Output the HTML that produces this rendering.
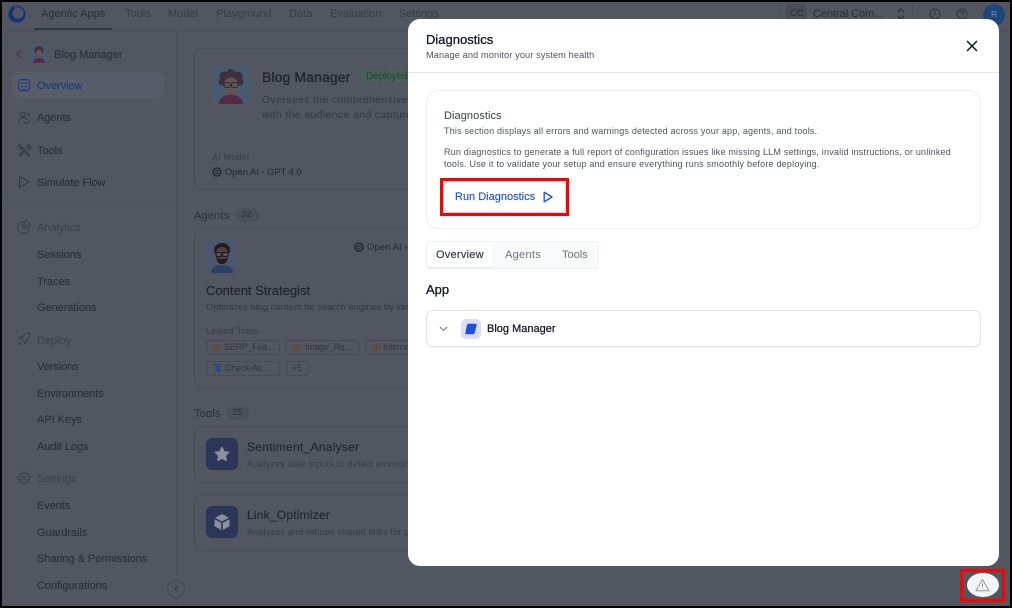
<!DOCTYPE html>
<html><head><meta charset="utf-8">
<style>
html,body{margin:0;padding:0;background:#000;}
#p{position:relative;width:1012px;height:608px;overflow:hidden;background:#000;font-family:"Liberation Sans",sans-serif;}
#bg{position:absolute;left:2px;top:2px;width:1008px;height:604px;background:#515661;overflow:hidden;}
.t{position:absolute;white-space:nowrap;line-height:16px;}
.n{font-size:11px;color:#2a2f3a;letter-spacing:-.05px;-webkit-text-stroke:.1px #2a2f3a;}
.g{color:#383d48;-webkit-text-stroke:.1px #383d48;}
.nav{font-size:11px;color:#383d48;}
.md{-webkit-text-stroke:.3px currentColor;}
.box{position:absolute;box-sizing:border-box;border:1px solid #494e59;border-radius:8px;}
svg{position:absolute;overflow:visible;}
.chip{position:absolute;box-sizing:border-box;height:15px;border:1px solid #474c57;border-radius:3px;}
.c{font-size:9px;color:#333844;letter-spacing:-.25px;}
#m{position:absolute;left:408px;top:19px;width:591px;height:547px;background:#fff;border-radius:12px;overflow:hidden;}
#m .t{color:#111827;}
</style></head><body>
<div id="p">
<div id="bg"></div>

<!-- logo -->
<svg style="left:8px;top:5px" width="18" height="18" viewBox="0 0 18 18"><circle cx="9" cy="9" r="8.600" fill="#15327a"/><circle cx="10" cy="8.300" r="5.400" fill="#515661"/><path d="M6 2.500a7.500 7.500 0 0 1 9.500 4.500" fill="none" stroke="#3a4a68" stroke-width="1.500"/></svg>
<!-- top nav -->
<div class="t nav" style="left:41px;top:6px;color:#2a2f3a">Agentic Apps</div>
<div class="t nav" style="left:125px;top:6px">Tools</div>
<div class="t nav" style="left:168px;top:6px">Model</div>
<div class="t nav" style="left:216px;top:6px">Playground</div>
<div class="t nav" style="left:289px;top:6px">Data</div>
<div class="t nav" style="left:330px;top:6px">Evaluation</div>
<div class="t nav" style="left:399px;top:6px">Settings</div>
<div style="position:absolute;left:34px;top:28px;width:78px;height:2px;background:#33383f"></div>
<div style="position:absolute;left:2px;top:30px;width:1008px;height:1px;background:#4b505b"></div>
<div style="position:absolute;left:176px;top:30px;width:1px;height:576px;background:#4c515c"></div>

<!-- top right -->
<div style="position:absolute;left:780px;top:2px;width:1px;height:28px;background:#494e59"></div>
<div style="position:absolute;left:786px;top:4px;width:20px;height:20px;border-radius:5px;background:#494e59;border:1px solid #444954;box-sizing:border-box"></div>
<div class="t g" style="left:790px;top:6px;font-size:9.500px;color:#2a2f3a">CC</div>
<div class="t" style="left:813px;top:6px;font-size:11px;color:#2a2f3a;letter-spacing:-.05px">Central Com...</div>
<svg style="left:897px;top:8px" width="8" height="12" viewBox="0 0 8 12"><path d="M1 4l3-3 3 3M1 8l3 3 3-3" fill="none" stroke="#282d38" stroke-width="1.200"/></svg>
<div style="position:absolute;left:912px;top:2px;width:1px;height:28px;background:#494e59"></div>
<svg style="left:929px;top:8px" width="12" height="12" viewBox="0 0 12 12"><circle cx="6" cy="6" r="5" fill="none" stroke="#2f343f" stroke-width="1"/><path d="M6 3v3.200l2 1" fill="none" stroke="#2f343f"/></svg>
<svg style="left:956px;top:8px" width="12" height="12" viewBox="0 0 12 12"><circle cx="6" cy="6" r="5" fill="none" stroke="#2f343f" stroke-width="1"/><path d="M4.600 4.800a1.500 1.500 0 1 1 2 1.400c-.4.2-.6.4-.6.9M6 8.600v.4" fill="none" stroke="#2f343f"/></svg>
<div style="position:absolute;left:983px;top:4px;width:22px;height:22px;border-radius:50%;background:#1e4679"></div>
<div class="t" style="left:991px;top:6px;font-size:8.500px;color:#7d93b5">R</div>

<!-- sidebar -->
<svg style="left:15px;top:49px" width="8" height="10" viewBox="0 0 8 10"><path d="M5.500 1L2 5l3.500 4" fill="none" stroke="#30353f" stroke-width="1"/></svg>
<svg style="left:30px;top:45px" width="18" height="18" viewBox="0 0 18 18"><rect width="18" height="18" rx="4" fill="#465a72"/><circle cx="9" cy="5.500" r="4.500" fill="#3d2b38"/><ellipse cx="9" cy="8" rx="3" ry="3.600" fill="#6d4f50"/><path d="M3.500 18c0-4 2.500-5 5.500-5s5.500 1 5.500 5z" fill="#542a46"/></svg>
<div class="t md" style="left:54px;top:47px;font-size:11px;color:#2f343f;-webkit-text-stroke-width:.25px">Blog Manager</div>

<div style="position:absolute;left:12px;top:72px;width:152px;height:26px;border-radius:6px;background:#585d69"></div>
<svg style="left:18px;top:79px" width="12" height="12" viewBox="0 0 12 12"><rect x=".6" y=".6" width="10.800" height="10.800" rx="2.200" fill="none" stroke="#1a3a86" stroke-width="1.100"/><g fill="#1a3a86"><circle cx="4.200" cy="4.200" r=".9"/><circle cx="7.800" cy="4.200" r=".9"/><circle cx="4.200" cy="7.800" r=".9"/><circle cx="7.800" cy="7.800" r=".9"/></g></svg>
<div class="t n" style="left:37px;top:78px;color:#1b3a85;-webkit-text-stroke-color:#1b3a85">Overview</div>

<svg style="left:18px;top:111px" width="13" height="13" viewBox="0 0 13 13"><circle cx="5" cy="3.500" r="2.300" fill="none" stroke="#32373f"/><path d="M1 11c0-3 2-4.500 4-4.500s3 .8 3.800 2.500M6 12c3 .5 5-.5 6-2.500M9.500 1.500l.5 1.500 1.500.5-1.500.5-.5 1.500" fill="none" stroke="#32373f" stroke-width=".9"/></svg>
<div class="t n" style="left:37px;top:110px">Agents</div>

<svg style="left:17px;top:143px" width="14" height="14" viewBox="0 0 14 14"><path d="M2 1l2.500 2.500v1h1L12.500 12 11.500 13 4.500 5.500h-1L1 3zM9 5.500a3 3 0 0 1 4-3.500L11 4l1 1 2-1.500a3 3 0 0 1-4 3.500M6 8l-4 4 1 1 4-4" fill="none" stroke="#32373f" stroke-width=".9"/></svg>
<div class="t n" style="left:37px;top:143px">Tools</div>

<svg style="left:18px;top:175px" width="12" height="14" viewBox="0 0 12 14"><path d="M1.500 1.500v11L11 7z" fill="none" stroke="#32373f" stroke-width="1"/></svg>
<div class="t n" style="left:37px;top:175px">Simulate Flow</div>

<div style="position:absolute;left:2px;top:204px;width:174px;height:1px;background:#4c515c"></div>

<svg style="left:17px;top:220px" width="14" height="14" viewBox="0 0 14 14"><path d="M6 1.500a6 6 0 1 0 6.500 6.500H6zM8 .7a6 6 0 0 1 5.300 5.300H8z" fill="none" stroke="#383d48" stroke-width=".9"/></svg>
<div class="t n" style="left:37px;top:220px;color:#3b404b;-webkit-text-stroke-width:0">Analytics</div>
<div class="t n" style="left:37px;top:247px">Sessions</div>
<div class="t n" style="left:37px;top:274px">Traces</div>
<div class="t n" style="left:37px;top:300px">Generations</div>

<svg style="left:17px;top:332px" width="14" height="14" viewBox="0 0 14 14"><path d="M13 1c-4 0-7 2-8.500 6l2.500 2.500C11 8 13 5 13 1zM4.500 7H2l2-2.500h2M7 9.500V12l2.500-2V8M3 10c-1 .5-1.500 2-1.500 2.500C2 12.500 3.500 12 4 11" fill="none" stroke="#383d48" stroke-width=".9"/></svg>
<div class="t n" style="left:37px;top:333px;color:#3b404b;-webkit-text-stroke-width:0">Deploy</div>
<div class="t n" style="left:37px;top:359px">Versions</div>
<div class="t n" style="left:37px;top:386px">Environments</div>
<div class="t n" style="left:37px;top:412px">API Keys</div>
<div class="t n" style="left:37px;top:439px">Audit Logs</div>

<svg style="left:17px;top:471px" width="14" height="14" viewBox="0 0 14 14"><circle cx="7" cy="7" r="2" fill="none" stroke="#383d48" stroke-width=".9"/><path d="M5.800 1h2.400l.4 1.700 1.600-.7 1.700 1.700-.8 1.500 1.900.6v2.400l-1.900.6.8 1.500-1.700 1.700-1.600-.7-.4 1.700H5.800l-.4-1.700-1.600.7-1.700-1.700.8-1.500L1 8.200V5.800l1.900-.6-.8-1.500L3.800 2l1.600.7z" fill="none" stroke="#383d48" stroke-width=".9"/></svg>
<div class="t n" style="left:37px;top:471px;color:#3b404b;-webkit-text-stroke-width:0">Settings</div>
<div class="t n" style="left:37px;top:498px">Events</div>
<div class="t n" style="left:37px;top:525px">Guardrails</div>
<div class="t n" style="left:37px;top:551px">Sharing &amp; Permissions</div>
<div class="t n" style="left:37px;top:578px">Configurations</div>

<div style="position:absolute;left:167px;top:580px;width:18px;height:18px;border-radius:50%;box-sizing:border-box;border:1px solid #454a55;background:#515661"></div>
<svg style="left:174px;top:585px" width="5" height="8" viewBox="0 0 5 8"><path d="M4 1L1 4l3 3" fill="none" stroke="#2f343f" stroke-width="1"/></svg>

<!-- content -->
<div class="box" style="left:194px;top:48px;width:260px;height:142px;"></div>
<svg style="left:212px;top:66px" width="38" height="38" viewBox="0 0 38 38"><rect width="38" height="38" rx="6" fill="#465a70"/><g fill="#3f2f3c"><circle cx="12" cy="10" r="4.500"/><circle cx="19" cy="8" r="5"/><circle cx="26" cy="10" r="4.500"/><circle cx="10" cy="16" r="3.500"/><circle cx="28" cy="16" r="3.500"/></g><ellipse cx="19" cy="20" rx="7.500" ry="8.500" fill="#6d5051"/><rect x="12" y="16.500" width="6.500" height="5" rx="2" fill="#4b5c60" stroke="#2f2b30"/><rect x="19.500" y="16.500" width="6.500" height="5" rx="2" fill="#4b5c60" stroke="#2f2b30"/><path d="M7 38c0-6 5-9 12-9s12 3 12 9z" fill="#542a48"/></svg>
<div class="t md" style="left:262px;top:69px;font-size:14px;color:#1f242f;letter-spacing:.1px">Blog Manager</div>
<div style="position:absolute;left:360px;top:69px;width:60px;height:14px;border-radius:8px;background:#4c5e5b;border:1px solid #475d55;box-sizing:border-box"></div>
<div class="t" style="left:366px;top:69px;font-size:10px;color:#1a4a32;letter-spacing:-.1px">Deployed</div>
<div class="t g" style="left:262px;top:92px;font-size:10.500px;letter-spacing:.35px">Oversees the comprehensive</div>
<div class="t g" style="left:262px;top:107px;font-size:10.500px;letter-spacing:.35px">with the audience and capture</div>
<div class="t" style="left:212px;top:149px;font-size:9px;color:#383d48;letter-spacing:.2px">AI Model</div>
<svg style="left:212px;top:167px" width="10" height="10" viewBox="0 0 10 10"><circle cx="5" cy="5" r="4" fill="none" stroke="#262b35" stroke-width="1.500"/><circle cx="5" cy="5" r="1.500" fill="none" stroke="#262b35"/></svg>
<div class="t" style="left:225px;top:165px;font-size:9.500px;color:#2a2f3a;letter-spacing:-.08px;-webkit-text-stroke:.1px #2a2f3a">Open AI - GPT 4.0</div>

<div class="t" style="left:194px;top:208px;font-size:11px;color:#2c313c;letter-spacing:.2px">Agents</div>
<div style="position:absolute;left:235px;top:208px;width:24px;height:14px;border-radius:8px;background:#4b505b"></div>
<div class="t" style="left:241px;top:207px;font-size:9.500px;color:#2c313c">32</div>

<div class="box" style="left:194px;top:228px;width:260px;height:160px;"></div>
<svg style="left:206px;top:240px" width="32" height="33" viewBox="0 0 32 33"><rect width="32" height="33" rx="6" fill="#4c566f"/><ellipse cx="16" cy="10" rx="8" ry="7" fill="#241d1f"/><ellipse cx="16" cy="15" rx="6.500" ry="8" fill="#57403a"/><path d="M10 17c1 6 3 7 6 7s5-1 6-7c-1 2-3 2-6 2s-5 0-6-2z" fill="#241d1f"/><rect x="10" y="12.500" width="5.500" height="4" rx="1.500" fill="#556" stroke="#1d1b20"/><rect x="16.500" y="12.500" width="5.500" height="4" rx="1.500" fill="#556" stroke="#1d1b20"/><path d="M5 33c0-6 5-8 11-8s11 2 11 8z" fill="#2d4066"/></svg>
<svg style="left:354px;top:242px" width="10" height="10" viewBox="0 0 10 10"><circle cx="5" cy="5" r="4" fill="none" stroke="#262b35" stroke-width="1.500"/><circle cx="5" cy="5" r="1.500" fill="none" stroke="#262b35"/></svg>
<div class="t" style="left:367px;top:240px;font-size:9.500px;color:#2a2f3a;letter-spacing:.05px;-webkit-text-stroke:.1px #2a2f3a">Open AI -</div>
<div class="t" style="left:206px;top:283px;font-size:13px;color:#1f242f;-webkit-text-stroke:.15px #1f242f">Content Strategist</div>
<div class="t g" style="left:206px;top:300px;font-size:9.500px;letter-spacing:-.05px">Optimizes blog content for search engines by ide</div>
<div class="t" style="left:206px;top:323px;font-size:9px;color:#383d48;letter-spacing:.2px">Linked Tools</div>

<div class="chip" style="left:206px;top:340px;width:74px"></div>
<svg style="left:212px;top:343px" width="9" height="9" viewBox="0 0 9 9"><path d="M2.500 2L.7 4.500 2.500 7M6.500 2L8.300 4.500 6.500 7M5.300 1L3.700 8" fill="none" stroke="#743f22" stroke-width="1.100"/></svg>
<div class="t c" style="left:224px;top:339px">SERP_Fea...</div>
<div class="chip" style="left:285px;top:340px;width:74px"></div>
<svg style="left:292px;top:343px" width="9" height="9" viewBox="0 0 9 9"><path d="M2.500 2L.7 4.500 2.500 7M6.500 2L8.300 4.500 6.500 7M5.300 1L3.700 8" fill="none" stroke="#743f22" stroke-width="1.100"/></svg>
<div class="t c" style="left:305px;top:339px">Image_Re...</div>
<div class="chip" style="left:365px;top:340px;width:74px"></div>
<svg style="left:372px;top:343px" width="9" height="9" viewBox="0 0 9 9"><path d="M2.500 2L.7 4.500 2.500 7M6.500 2L8.300 4.500 6.500 7M5.300 1L3.700 8" fill="none" stroke="#743f22" stroke-width="1.100"/></svg>
<div class="t c" style="left:383px;top:339px">Internal_Li...</div>
<div class="chip" style="left:206px;top:361px;width:74px"></div>
<svg style="left:212px;top:363px" width="10" height="10" viewBox="0 0 10 10"><path d="M1 1.500h3M4 1.500h4v2H4zM6 3.500v6M4 6h4v2H4z" fill="none" stroke="#1f4590" stroke-width="1.100"/></svg>
<div class="t c" style="left:225px;top:360px">Check-As...</div>
<div class="chip" style="left:286px;top:361px;width:23px"></div>
<div class="t c" style="left:292px;top:360px;letter-spacing:0">+5</div>

<div class="t" style="left:194px;top:406px;font-size:11px;color:#2c313c;letter-spacing:.2px">Tools</div>
<div style="position:absolute;left:227px;top:406px;width:22px;height:14px;border-radius:8px;background:#4b505b"></div>
<div class="t" style="left:232px;top:405px;font-size:9.500px;color:#2c313c">25</div>

<div class="box" style="left:194px;top:426px;width:260px;height:57px;"></div>
<div style="position:absolute;left:206px;top:438px;width:32px;height:32px;border-radius:6px;background:#2c3658"></div>
<svg style="left:214px;top:446px" width="16" height="16" viewBox="0 0 18 18"><path d="M9 1l2.500 5.300 5.500.7-4 3.900 1 5.600L9 14l-5 2.500 1-5.600L1 7l5.500-.7z" fill="#8b909c" stroke="#8b909c" stroke-linejoin="round"/></svg>
<div class="t" style="left:247px;top:439px;font-size:12px;color:#1f242f;letter-spacing:.28px;-webkit-text-stroke:.1px #1f242f">Sentiment_Analyser</div>
<div class="t" style="left:247px;top:456px;font-size:9px;color:#383d48;letter-spacing:.2px">Analyzes user inputs to detect emotior</div>

<div class="box" style="left:194px;top:494px;width:260px;height:57px;"></div>
<div style="position:absolute;left:206px;top:506px;width:32px;height:32px;border-radius:6px;background:#2c3658"></div>
<svg style="left:213px;top:513px" width="18" height="18" viewBox="0 0 18 18"><path d="M9 1l7 3.800L9 8.500 2 4.800z" fill="#8b909c"/><path d="M1.500 6.200l6.700 3.600V17l-6.700-3.700zM16.500 6.200L9.800 9.800V17l6.700-3.700z" fill="#8b909c"/></svg>
<div class="t" style="left:247px;top:507px;font-size:12px;color:#1f242f;letter-spacing:.22px;-webkit-text-stroke:.1px #1f242f">Link_Optimizer</div>
<div class="t" style="left:247px;top:524px;font-size:9px;color:#383d48;letter-spacing:.2px">Analyzes and refines shared links for p</div>

<!-- modal -->
<div id="m">
  <div class="t md" style="left:18px;top:13px;font-size:13px;letter-spacing:0">Diagnostics</div>
  <div class="t" style="left:18px;top:28px;font-size:9.200px;color:#4b5563;letter-spacing:.12px">Manage and monitor your system health</div>
  <svg style="left:558px;top:21px" width="12" height="12" viewBox="0 0 12 12"><path d="M1 1l10 10M11 1L1 11" stroke="#111827" stroke-width="1.500" fill="none"/></svg>
  <div style="position:absolute;left:0;top:53px;width:591px;height:1px;background:#e5e7eb"></div>

  <div style="position:absolute;left:18px;top:71px;width:555px;height:139px;box-sizing:border-box;border:1px solid #eceef2;border-radius:12px"></div>
  <div class="t" style="left:36px;top:89px;font-size:11px;color:#374151;letter-spacing:.07px">Diagnostics</div>
  <div class="t" style="left:36px;top:104px;font-size:9px;color:#4b5563;letter-spacing:.19px">This section displays all errors and warnings detected across your app, agents, and tools.</div>
  <div class="t" style="left:36px;top:125px;font-size:9px;color:#4b5563;letter-spacing:.2px">Run diagnostics to generate a full report of configuration issues like missing LLM settings, invalid instructions, or unlinked</div>
  <div class="t" style="left:36px;top:137px;font-size:9px;color:#4b5563;letter-spacing:.21px">tools. Use it to validate your setup and ensure everything runs smoothly before deploying.</div>

  <div style="position:absolute;left:35px;top:162px;width:123px;height:32px;box-sizing:border-box;border:1px solid #c7d5f5;border-radius:6px;background:#fff"></div>
  <div class="t" style="left:47px;top:170px;font-size:11px;color:#1d55e0;-webkit-text-stroke:.15px #1d55e0">Run Diagnostics</div>
  <svg style="left:135px;top:172px" width="10" height="12" viewBox="0 0 10 12"><path d="M1.200 1.200v9.600L9 6z" fill="none" stroke="#1d55e0" stroke-width="1.400" stroke-linejoin="round"/></svg>
  <div style="position:absolute;left:32px;top:159px;width:129px;height:38px;box-sizing:border-box;border:3px solid #f00"></div>

  <div style="position:absolute;left:18px;top:222px;width:173px;height:28px;box-sizing:border-box;border:1px solid #eef0f3;border-radius:4px;background:#f9fafb"></div>
  <div style="position:absolute;left:19px;top:223px;width:66px;height:25px;border-radius:3px;background:#fff;box-shadow:0 1px 1px #e1e4ea"></div>
  <div class="t" style="left:28px;top:228px;font-size:11px;color:#374151;letter-spacing:.25px;-webkit-text-stroke:.2px #374151">Overview</div>
  <div class="t" style="left:97px;top:228px;font-size:11px;color:#6b7280;letter-spacing:.3px">Agents</div>
  <div class="t" style="left:154px;top:228px;font-size:11px;color:#6b7280">Tools</div>
  <div class="t md" style="left:18px;top:263px;font-size:13px">App</div>

  <div style="position:absolute;left:18px;top:291px;width:555px;height:37px;box-sizing:border-box;border:1px solid #e1e4ea;border-radius:7px;box-shadow:0 1px 1px #eef0f3"></div>
  <svg style="left:31px;top:307px" width="9" height="6" viewBox="0 0 9 6"><path d="M1 1l3.500 3.500L8 1" fill="none" stroke="#8a93a3" stroke-width="1.300"/></svg>
  <div style="position:absolute;left:53px;top:300px;width:20px;height:20px;border-radius:5px;background:#dcdcfb"></div>
  <svg style="left:55px;top:302px" width="16" height="16" viewBox="0 0 16 16"><path d="M5.500 3.500h7.500L11 11.500c-.2.700-.6 1-1.300 1H3L4.700 4.500c.1-.6.400-1 .8-1z" fill="#1d4fe0" stroke="#1d4fe0" stroke-width="1.500" stroke-linejoin="round"/></svg>
  <div class="t" style="left:79px;top:302px;font-size:11px;-webkit-text-stroke:.25px #111827">Blog Manager</div>
</div>

<!-- warning button -->
<div style="position:absolute;left:967px;top:573px;width:32px;height:24px;border-radius:50%;background:#f3f4f6"></div>
<svg style="left:975px;top:578px" width="15" height="14" viewBox="0 0 15 14"><path d="M7.500 1.500L14 12.800H1z" fill="none" stroke="#9198a8" stroke-width="1" stroke-linejoin="round"/><path d="M7.500 5.500v3.500M7.500 10.300v.8" stroke="#9198a8" stroke-width="1"/></svg>
<div style="position:absolute;left:960px;top:569px;width:45px;height:33px;box-sizing:border-box;border:3px solid #f00"></div>
</div>
</body></html>
